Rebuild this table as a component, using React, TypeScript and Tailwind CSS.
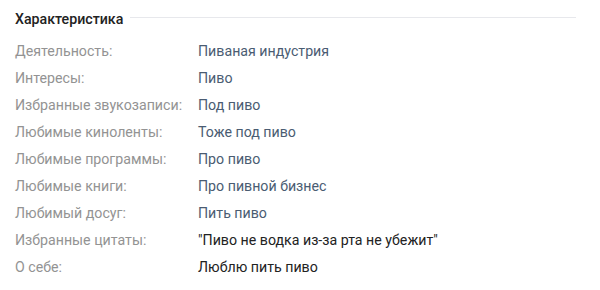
const rows: { label: string; value: string; dark?: boolean }[] = [
  { label: "Деятельность:", value: "Пиваная индустрия" },
  { label: "Интересы:", value: "Пиво" },
  { label: "Избранные звукозаписи:", value: "Под пиво" },
  { label: "Любимые киноленты:", value: "Тоже под пиво" },
  { label: "Любимые программы:", value: "Про пиво" },
  { label: "Любимые книги:", value: "Про пивной бизнес" },
  { label: "Любимый досуг:", value: "Пить пиво" },
  { label: "Избранные цитаты:", value: "\"Пиво не водка из-за рта не убежит\"", dark: true },
  { label: "О себе:", value: "Люблю пить пиво", dark: true },
];

export default function App() {
  return (
    <div className="h-[290px] w-[600px] bg-white pl-[15px] pr-[24px] pt-[9px] font-['Roboto',sans-serif]">
      <div className="flex items-center gap-[7px]">
        <h2 className="text-[14.2px] font-medium leading-[20px] text-[#222]">Характеристика</h2>
        <div className="mt-[-3px] h-px flex-1 bg-[#e7e8ec]" />
      </div>
      <div className="mt-[9px] flex flex-col">
        {rows.map((row) => (
          <div key={row.label} className="flex h-[27px] items-center text-[14.2px]">
            <span className="w-[183px] shrink-0 text-[#939393]">{row.label}</span>
            <span className={row.dark ? "text-[#222]" : "text-[#4a5c72]"}>{row.value}</span>
          </div>
        ))}
      </div>
    </div>
  );
}
